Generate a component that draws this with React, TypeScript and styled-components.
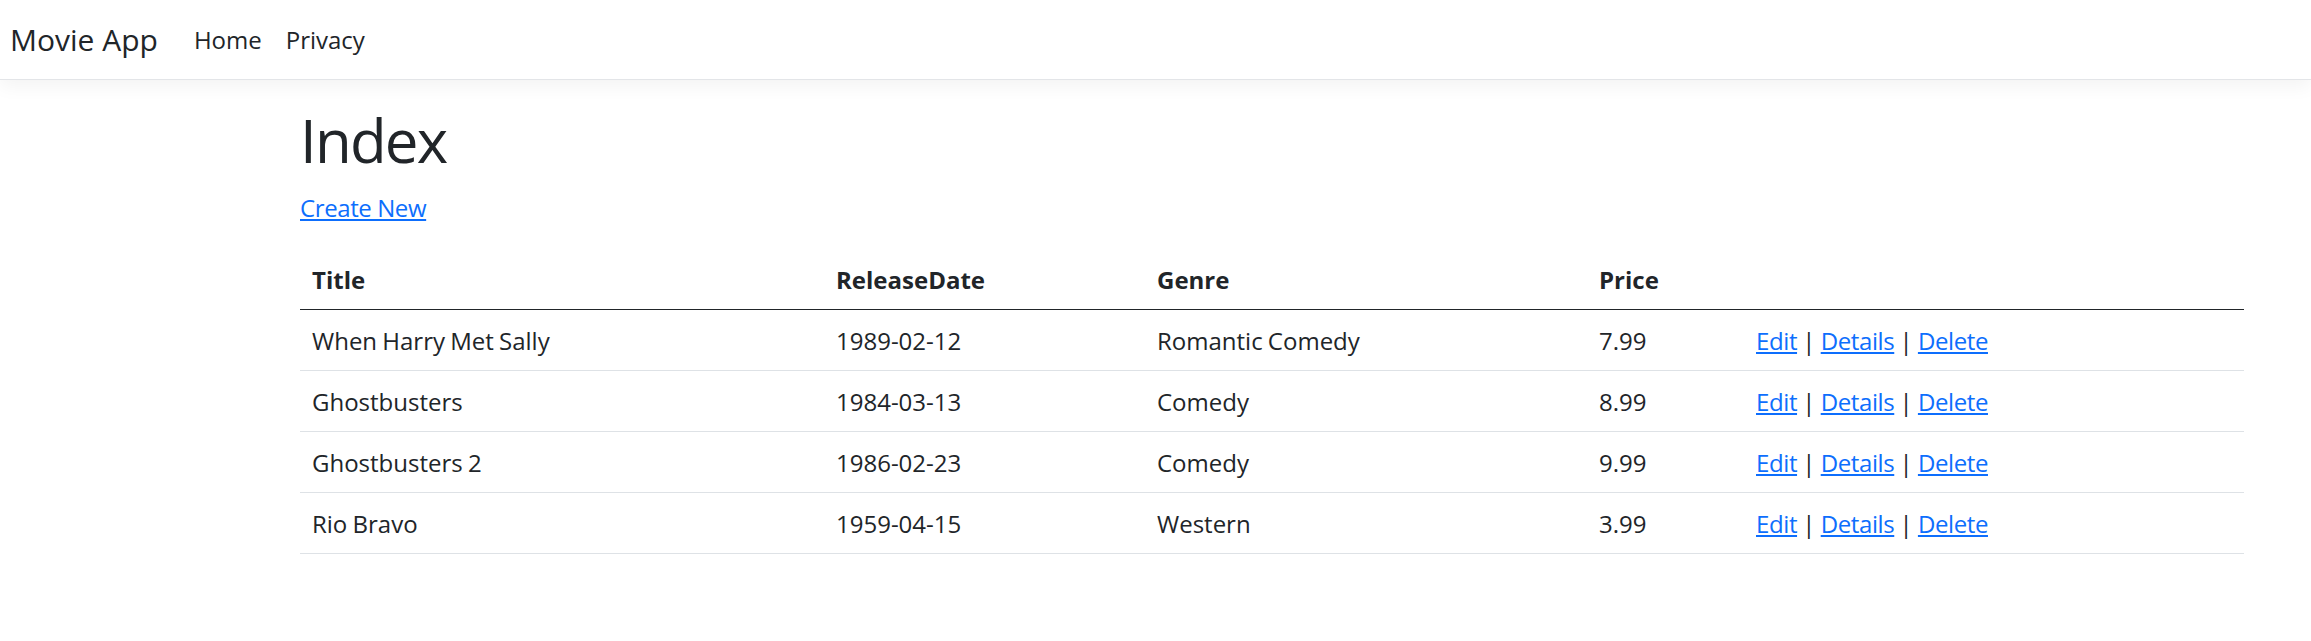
import React from "react";
import styled, { createGlobalStyle } from "styled-components";

const Global = createGlobalStyle`
  html, body { margin: 0; padding: 0; background: #fff; }
  body {
    font-family: "Open Sans", "Noto Sans CJK KR", sans-serif;
    font-size: 24px;
    line-height: 1.5;
    color: #212529;
  }
  * { box-sizing: border-box; }
`;

const Navbar = styled.nav`
  display: flex;
  align-items: center;
  height: 80px;
  padding: 0 10px;
  background: #fff;
  border-bottom: 1px solid #e3e5e8;
  box-shadow: 0 6px 18px rgba(0, 0, 0, 0.05);
`;

const Brand = styled.a`
  font-size: 30px;
  line-height: 45px;
  color: #212529;
  text-decoration: none;
  margin-right: 24px;
`;

const NavList = styled.ul`
  display: flex;
  list-style: none;
  margin: 0;
  padding: 0;
`;

const NavLink = styled.a`
  display: block;
  padding: 0 12px;
  font-size: 24px;
  line-height: 36px;
  color: #212529;
  text-decoration: none;
`;

const Main = styled.main`
  padding: 24px 67px 0 300px;
`;

const Heading = styled.h1`
  margin: 0 0 14px;
  font-size: 60px;
  line-height: 72px;
  font-weight: 400;
  letter-spacing: -1.8px;
`;

const Para = styled.p`
  margin: 0 0 22.5px;
`;

const Link = styled.a`
  color: #0d6efd;
  text-decoration: underline;
  text-underline-offset: 2px;
  letter-spacing: -0.4px;
`;

const Table = styled.table`
  width: 100%;
  border-collapse: collapse;
  table-layout: fixed;
`;

const Th = styled.th`
  text-align: left;
  font-weight: 700;
  padding: 13px 12px 11px;
  line-height: 36px;
  border-bottom: 1px solid #212529;
`;

const Td = styled.td`
  padding: 13px 12px 11px;
  line-height: 36px;
  border-bottom: 1px solid #dee2e6;
  white-space: nowrap;
  word-spacing: -1px;
`;

const Sep = styled.span`
  color: #212529;
`;

const movies = [
  { title: "When Harry Met Sally", date: "1989-02-12", genre: "Romantic Comedy", price: "7.99" },
  { title: "Ghostbusters", date: "1984-03-13", genre: "Comedy", price: "8.99" },
  { title: "Ghostbusters 2", date: "1986-02-23", genre: "Comedy", price: "9.99" },
  { title: "Rio Bravo", date: "1959-04-15", genre: "Western", price: "3.99" },
];

const widths = [524, 321, 442, 157, 500];

export default function App() {
  return (
    <>
      <Global />
      <Navbar>
        <Brand href="#">Movie App</Brand>
        <NavList>
          <li><NavLink href="#">Home</NavLink></li>
          <li><NavLink href="#">Privacy</NavLink></li>
        </NavList>
      </Navbar>
      <Main>
        <Heading>Index</Heading>
        <Para><Link href="#">Create New</Link></Para>
        <Table>
          <colgroup>
            {widths.map((w, i) => <col key={i} style={{ width: w }} />)}
          </colgroup>
          <thead>
            <tr>
              <Th>Title</Th>
              <Th>ReleaseDate</Th>
              <Th>Genre</Th>
              <Th>Price</Th>
              <Th></Th>
            </tr>
          </thead>
          <tbody>
            {movies.map((m) => (
              <tr key={m.title}>
                <Td>{m.title}</Td>
                <Td>{m.date}</Td>
                <Td>{m.genre}</Td>
                <Td>{m.price}</Td>
                <Td>
                  <Link href="#">Edit</Link> <Sep>|</Sep> <Link href="#">Details</Link> <Sep>|</Sep> <Link href="#">Delete</Link>
                </Td>
              </tr>
            ))}
          </tbody>
        </Table>
      </Main>
    </>
  );
}
